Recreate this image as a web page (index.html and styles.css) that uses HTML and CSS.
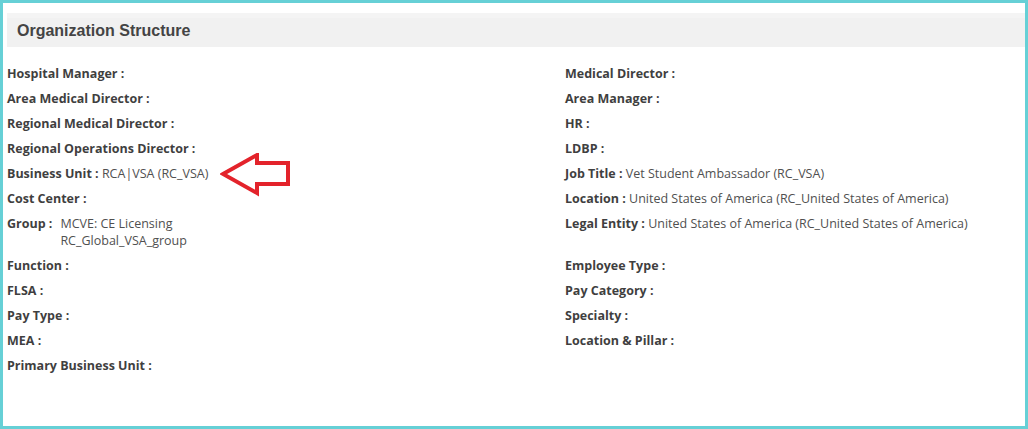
FILE: index.html
```html
<!DOCTYPE html>
<html>
<head>
<meta charset="utf-8">
<link rel="stylesheet" href="styles.css">
</head>
<body>
<div class="frame">
  <div class="panel">
    <div class="panel-header">Organization Structure</div>
    <div class="fields">
      <div class="col">
        <div class="row"><span class="lbl">Hospital Manager :</span></div>
        <div class="row"><span class="lbl">Area Medical Director :</span></div>
        <div class="row"><span class="lbl">Regional Medical Director :</span></div>
        <div class="row"><span class="lbl">Regional Operations Director :</span></div>
        <div class="row bu"><span class="lbl">Business Unit :</span> <span class="val">RCA|VSA (RC_VSA)</span>
          <svg class="arrow" width="72" height="44" viewBox="0 0 72 44">
            <polygon points="3,21 37,2 37,10 68,10 68,31 37,31 37,40" fill="none" stroke="#e3232b" stroke-width="4" stroke-linejoin="miter"/>
          </svg>
        </div>
        <div class="row"><span class="lbl">Cost Center :</span></div>
        <div class="row group"><span class="lbl">Group :</span><span class="val multi">MCVE: CE Licensing<br>RC_Global_VSA_group</span></div>
        <div class="row"><span class="lbl">Function :</span></div>
        <div class="row"><span class="lbl">FLSA :</span></div>
        <div class="row"><span class="lbl">Pay Type :</span></div>
        <div class="row"><span class="lbl">MEA :</span></div>
        <div class="row"><span class="lbl">Primary Business Unit :</span></div>
      </div>
      <div class="col">
        <div class="row"><span class="lbl">Medical Director :</span></div>
        <div class="row"><span class="lbl">Area Manager :</span></div>
        <div class="row"><span class="lbl">HR :</span></div>
        <div class="row"><span class="lbl">LDBP :</span></div>
        <div class="row"><span class="lbl">Job Title :</span> <span class="val">Vet Student Ambassador (RC_VSA)</span></div>
        <div class="row"><span class="lbl">Location :</span> <span class="val">United States of America (RC_United States of America)</span></div>
        <div class="row tall"><span class="lbl">Legal Entity :</span> <span class="val">United States of America (RC_United States of America)</span></div>
        <div class="row"><span class="lbl">Employee Type :</span></div>
        <div class="row"><span class="lbl">Pay Category :</span></div>
        <div class="row"><span class="lbl">Specialty :</span></div>
        <div class="row"><span class="lbl">Location &amp; Pillar :</span></div>
      </div>
    </div>
  </div>
</div>
</body>
</html>
```

FILE: styles.css
```css
html, body {
  margin: 0;
  padding: 0;
  background: #ffffff;
}
.frame {
  box-sizing: border-box;
  width: 1028px;
  height: 429px;
  border: 3px solid #66d0d6;
  padding: 10px 0 0 4px;
  background: #ffffff;
}
.panel-header {
  height: 34px;
  background: #f1f1f1;
  border-top: 5px solid #f4f4f4;
  box-sizing: border-box;
  padding-left: 10px;
  font-family: "Liberation Sans", Arial, sans-serif;
  font-weight: 700;
  font-size: 16px;
  color: #444444;
  line-height: 26px;
}
.fields {
  display: grid;
  grid-template-columns: 558px 1fr;
  padding-top: 18px;
  font-family: "Open Sans", sans-serif;
  font-size: 12.5px;
}
.row {
  line-height: 17px;
  margin-bottom: 8px;
  white-space: nowrap;
}
.row.tall {
  margin-bottom: 25px;
}
.lbl {
  font-weight: 700;
  color: #3f3f3f;
}
.val {
  color: #505050;
}
.group {
  display: flex;
  gap: 8px;
}
.bu {
  position: relative;
}
.arrow {
  position: absolute;
  left: 213px;
  top: -12px;
}
```
